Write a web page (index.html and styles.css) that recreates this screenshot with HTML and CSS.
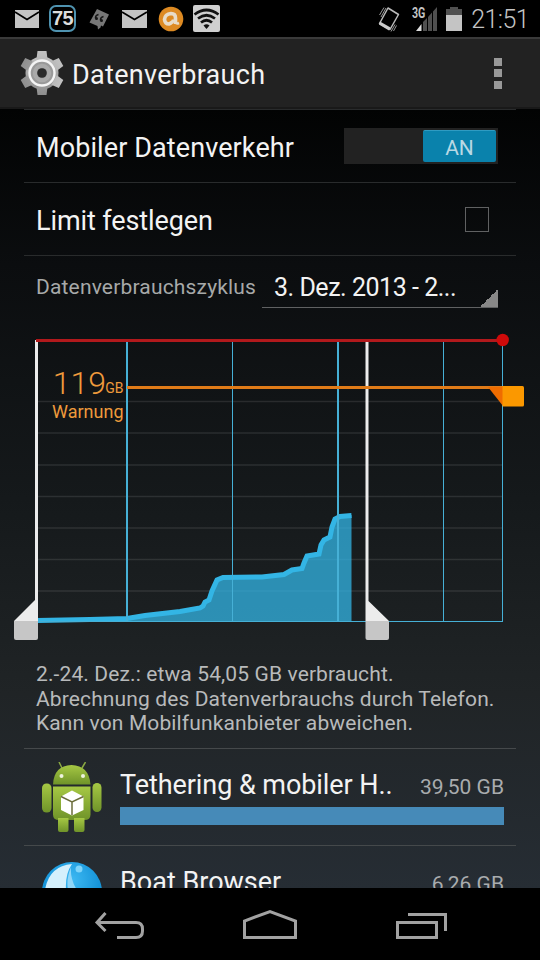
FILE: index.html
```html
<!DOCTYPE html>
<html lang="de">
<head>
    <meta charset="UTF-8">
    <meta name="viewport" content="width=device-width, initial-scale=1.0">
    <title>Datenverbrauch</title>
    <link rel="stylesheet" href="styles.css">
</head>
<body>
    <header class="status-bar">
        <div class="notifications">
            <svg class="mail" width="24" height="18" viewBox="0 0 24 18">
                <path d="M0 0h24v18H0z" fill="#c4c4c4"/>
                <path d="M0 2l12 7.500 12-7.500" fill="none" stroke="#000" stroke-width="1.6"/>
            </svg>
            <span class="battery-badge">75</span>
            <svg class="quote" width="20" height="22" viewBox="0 0 20 22">
                <path d="M8 1L20 6.500 14 18.500 12 17.500 11.500 19.500 9 21.500 8.500 18 0.500 14.500z" fill="#777"/>
                <path d="M9.500 6.500Q6 7.500 6.500 10.500M14.500 8.500Q11 9.500 11.500 12.500" fill="none" stroke="#161616" stroke-width="1.400"/>
                <circle cx="7.500" cy="10.500" r="1.500" fill="#161616"/>
                <circle cx="12.500" cy="12.500" r="1.500" fill="#161616"/>
            </svg>
            <svg class="mail" width="25" height="18" viewBox="0 0 24 18" preserveAspectRatio="none">
                <path d="M0 0h24v18H0z" fill="#c4c4c4"/>
                <path d="M0 2l12 7.500 12-7.500" fill="none" stroke="#000" stroke-width="1.6"/>
            </svg>
            <svg class="avast" width="26" height="26" viewBox="0 0 26 26">
                <circle cx="13" cy="13" r="12.300" fill="#dd8a22"/>
                <path d="M17.500 18V12Q17.500 7.500 13 7.500 7 8 6.500 13.500 7 18 11 18 14.500 17 14.500 13.500" fill="none" stroke="#e8dcc8" stroke-width="3.600"/>
                <path d="M17 14.500Q17.500 18.500 21 17" fill="none" stroke="#e8dcc8" stroke-width="2.500"/>
                <circle cx="12" cy="13.500" r="1.700" fill="#dd8a22"/>
            </svg>
            <svg class="wifi" width="27" height="27" viewBox="0 0 27 27">
                <rect width="27" height="27" rx="2" fill="#cfcfcf"/>
                <g fill="none" stroke="#111" stroke-width="2.700">
                    <path d="M1.500 9.500Q13.500 0.500 25.500 9.500"/>
                    <path d="M5 13.500q8.500-6.500 17 0"/>
                    <path d="M8 17.500q5.500-4.500 11 0"/>
                </g>
                <path d="M10.500 20.500q3-2.500 6 0l-3 3.500z" fill="#111"/>
            </svg>
        </div>
        <div class="system">
            <svg class="vibrate" width="22" height="26" viewBox="0 0 22 26">
                <path d="M10 2L20.500 8.500 12 23.500 1.500 17.500z" fill="none" stroke="#bbb" stroke-width="1.500" stroke-linejoin="round"/>
                <path d="M2 15.500l10.500 6-1.500 3-10-6z" fill="#ccc"/>
                <path d="M3 11L8 2M1.500 9L6 1.500M13 25.500l4-7M15.500 25l3-5.500" stroke="#999" stroke-width="1" fill="none"/>
            </svg>
            <div class="network">
                <svg width="25" height="25" viewBox="0 0 25 25">
                    <path d="M25 1v24h-4V5.500zM20 6.500V25h-4V11zM15 12v13h-4v-9z" fill="#505050"/>
                    <path d="M9.500 18v7H4z" fill="#ddd"/>
                </svg>
                <span class="network-type">3G</span>
            </div>
            <svg class="battery" width="16" height="24" viewBox="0 0 16 24">
                <path d="M4 0h8v2h4v6H0V2h4z" fill="#505050"/>
                <path d="M0 8h16v16H0z" fill="#c4c4c4"/>
            </svg>
            <span class="clock">21:51</span>
        </div>
    </header>

    <div class="action-bar">
        <svg class="gear" width="44" height="46" viewBox="-22 -23 44 46">
            <defs>
                <linearGradient id="metal" x1="0" y1="0" x2="0" y2="1">
                    <stop offset="0" stop-color="#c2c2c2"/>
                    <stop offset="1" stop-color="#8f8f8f"/>
                </linearGradient>
            </defs>
            <g fill="url(#metal)">
                <circle r="16.500"/>
                <path d="M-4.500-22H4.500L5.500-14H-5.500zM-4.500 22H4.500L5.500 14H-5.500z"/>
                <path d="M-4.500-22H4.500L5.500-14H-5.500zM-4.500 22H4.500L5.500 14H-5.500z" transform="rotate(60)"/>
                <path d="M-4.500-22H4.500L5.500-14H-5.500zM-4.500 22H4.500L5.500 14H-5.500z" transform="rotate(120)"/>
            </g>
            <circle r="12.500" fill="#999" stroke="#f4f4f4" stroke-width="2.400"/>
            <circle r="7.200" fill="none" stroke="#aaa" stroke-width="4"/>
            <circle r="4.800" fill="#2a2a2a"/>
        </svg>
        <h1>Datenverbrauch</h1>
        <div class="overflow-menu"><i></i><i></i><i></i></div>
    </div>

    <main>
        <div class="row">
            <span class="row-title mobile-data">Mobiler Datenverkehr</span>
            <div class="switch"><span>AN</span></div>
        </div>
        <div class="row">
            <span class="row-title limit">Limit festlegen</span>
            <div class="checkbox"></div>
        </div>
        <div class="cycle">
            <span class="cycle-label">Datenverbrauchszyklus</span>
            <div class="spinner"><span>3. Dez. 2013 - 2...</span></div>
        </div>

        <svg class="chart" width="540" height="325" viewBox="0 325 540 325">
            <!-- grid -->
            <path d="M38 401.500H502M38 433H502M38 465H502M38 496.500H502M38 528H502M38 559.500H502M38 591H502" stroke="#fff" stroke-opacity=".1" stroke-width="1.500"/>
            <!-- usage -->
            <path d="M37 620L127 618 145 615 180 611 200 608 203 606 206 602 209 600 212 591 217 580 223 577 262 577 284 574 292 570 302 568 304 563 307 556 319 554 321 545 324 540 330 537 332 527 335 519 340 516 351.500 515V621.500H37z" fill="#33b5e5" fill-opacity=".75"/>
            <path d="M37 620.500L90 619.500 127 618.500 145 615.500 180 611.500 200 608 203 606 205 602 209 600 212 591 217 580 223 577.500 262 577 284 574.500 292 570 302 568.500 304 563 307 556 319 554 321 545 324 540 330 537 332 527 335 519 340 516.500 351.500 515.500" fill="none" stroke="#33b5e5" stroke-width="5"/>
            <!-- weeks -->
            <g stroke="#46b0d6" fill="none">
                <path d="M127 342V621M338 342V621" stroke-width="2"/>
                <path d="M232.500 342V621M443.500 342V621M502.500 342V621.500M37 621.500H503" stroke-width="1"/>
            </g>
            <!-- range handles -->
            <path d="M35 340h3v281H14l21-21z" fill="#ececec"/>
            <path d="M14 621h24v17q0 2-2 2H16q-2 0-2-2z" fill="#c6c6c6"/>
            <path d="M365.500 342h3v259l20.500 20h-23.500z" fill="#ececec"/>
            <path d="M365.500 621h23.500v17q0 2-2 2h-19.500q-2 0-2-2z" fill="#c6c6c6"/>
            <!-- limit and warning -->
            <path d="M36 340.500H503" stroke="#b2191c" stroke-width="3"/>
            <circle cx="502.700" cy="340" r="6.200" fill="#cf0a0a"/>
            <path d="M127 387.500H503" stroke="#e07b18" stroke-width="3"/>
            <path d="M488 387h15v19z" fill="#ef6c00"/>
            <path d="M502.500 386h20q1.500 0 1.500 1.500v17.500q0 1.500-1.500 1.500h-20z" fill="#fb9800"/>
            <g class="warning" text-anchor="end">
                <text class="warning-value" x="106" y="393.500">119</text>
                <text class="warning-unit" x="123.500" y="393">GB</text>
                <text class="warning-label" x="123.500" y="417.500">Warnung</text>
            </g>
        </svg>

        <p class="summary">2.-24. Dez.: etwa 54,05 GB verbraucht.<br>Abrechnung des Datenverbrauchs durch Telefon.<br>Kann von Mobilfunkanbieter abweichen.</p>

        <div class="app">
            <svg class="app-icon" width="62" height="72" viewBox="0 0 62 72">
                <defs>
                    <linearGradient id="droid" x1="0" y1="0" x2="0" y2="1">
                        <stop offset="0" stop-color="#a6c844"/>
                        <stop offset="1" stop-color="#6f9329"/>
                    </linearGradient>
                </defs>
                <path d="M21 6L18 0M41 6l3.500-6" stroke="#8aa843" stroke-width="1.500"/>
                <g fill="url(#droid)">
                    <path d="M12 22.500Q13 3.500 30.500 3 48 3.500 49.500 22.500z"/>
                    <path d="M12 24.500h37.500v28q0 5.500-6 5.500H18q-6 0-6-5.500z"/>
                    <rect x="1" y="21.500" width="9.500" height="29" rx="4.500"/>
                    <rect x="51.500" y="21" width="9" height="29" rx="4.500"/>
                    <path d="M17 56h10.500v12q0 2-2 2H19q-2 0-2-2zM33 56h10.500v12q0 2-2 2H35q-2 0-2-2z"/>
                </g>
                <circle cx="20.500" cy="14" r="2" fill="#eef3df"/>
                <circle cx="42" cy="14" r="2" fill="#eef3df"/>
                <path d="M31 28.500l11.500 6V48L31 53.500 20 48V34.500z" fill="#fff"/>
                <path d="M20 34.500l11 5.500 11.500-5.500M31 40v13" fill="none" stroke="#6c6e3c" stroke-width="1.500"/>
            </svg>
            <div class="app-info">
                <div class="app-line">
                    <span class="app-name">Tethering &amp; mobiler H..</span>
                    <span class="app-usage">39,50 GB</span>
                </div>
                <div class="bar" style="width: 100%"></div>
            </div>
        </div>
        <div class="app second">
            <svg class="app-icon" width="62" height="62" viewBox="0 0 62 62">
                <defs>
                    <radialGradient id="ocean" cx=".5" cy=".3" r=".6">
                        <stop offset="0" stop-color="#3db9f3"/>
                        <stop offset=".8" stop-color="#1593d8"/>
                        <stop offset="1" stop-color="#27b6e6"/>
                    </radialGradient>
                </defs>
                <circle cx="31" cy="33" r="30" fill="url(#ocean)"/>
                <path d="M31 5Q8 7 4 31H25Q24 15 31 5z" fill="#d4f0fc"/>
                <path d="M30 8q-5 12-3 23h9Q29 20 30 8z" fill="#8fd6f8"/>
                <circle cx="38" cy="10" r="3.500" fill="#7fd4fa"/>
            </svg>
            <div class="app-info">
                <div class="app-line">
                    <span class="app-name boat">Boat Browser</span>
                    <span class="app-usage">6,26 GB</span>
                </div>
                <div class="bar" style="width: 16%"></div>
            </div>
        </div>
    </main>

    <nav>
        <svg width="540" height="72" viewBox="0 888 540 72" fill="none" stroke="#a2a2a2" stroke-width="3">
            <path d="M97 922.500H136Q142.500 922.500 142.500 929V931Q142.500 937.500 136 937.500H117M105.500 913L97 922.500 105.500 931"/>
            <path d="M244.500 937.500V921L270 911.500 295.500 921V937.500z"/>
            <path d="M397.500 922.500h39v15h-39zM408 914.500h37.500V931"/>
        </svg>
    </nav>
</body>
</html>
```

FILE: styles.css
```css
* {
    margin: 0;
    padding: 0;
    box-sizing: border-box;
}

body {
    width: 540px;
    height: 960px;
    overflow: hidden;
    display: flex;
    flex-direction: column;
    background: #000;
    color: #f3f3f3;
    font-family: Roboto, "Liberation Sans", sans-serif;
    white-space: nowrap;
}

svg {
    display: block;
    flex: none;
}

/* status bar */
.status-bar {
    height: 37px;
    flex: none;
    display: flex;
    justify-content: space-between;
    padding: 0 11px 0 15px;
}

.notifications,
.system {
    display: flex;
    align-items: center;
}

.battery-badge {
    width: 27px;
    height: 27px;
    margin: 0 13px 0 10px;
    border: 2px solid #4f93b0;
    border-radius: 7px;
    color: #ddd;
    font: bold 20px/23px "Liberation Sans", sans-serif;
    text-align: center;
    letter-spacing: -0.5px;
}

.quote {
    margin-right: 13px;
}

.avast {
    margin: 0 9px 0 11px;
}

.vibrate {
    margin-right: 12px;
}

.network {
    position: relative;
    margin-right: 9px;
}

.network-type {
    position: absolute;
    top: 0;
    left: 0;
    color: #c4c4c4;
    font: bold 14px/14px Roboto, sans-serif;
    transform: scaleX(0.76);
    transform-origin: left;
}

.clock {
    margin-left: 9px;
    padding-top: 3px;
    color: #c4c4c4;
    font-size: 25px;
    line-height: 34px;
    font-weight: 300;
    letter-spacing: -0.6px;
}

/* action bar */
.action-bar {
    height: 72px;
    flex: none;
    display: flex;
    align-items: center;
    padding: 0 38px 0 20px;
    background: #222;
    border-top: 2px solid #3a3a3a;
    border-bottom: 2px solid #191919;
}

h1 {
    flex: 1;
    margin-left: 8px;
    padding-top: 3px;
    font-size: 27px;
    line-height: 32px;
    font-weight: 400;
    letter-spacing: 0.3px;
}

.overflow-menu {
    display: flex;
    flex-direction: column;
    gap: 3.5px;
}

.overflow-menu i {
    width: 8px;
    height: 8px;
    background: #999;
}

/* content */
main {
    height: 779px;
    flex: none;
    overflow: hidden;
    background: linear-gradient(#020303, #0b0d0f 20%, #15191b 50%, #202426 75%, #262d34);
}

.row {
    height: 73px;
    margin: 0 24px;
    padding: 0 18px 0 12px;
    display: flex;
    align-items: center;
    justify-content: space-between;
    border-top: 1px solid #292b2c;
}

.row-title {
    font-size: 27px;
    line-height: 32px;
    padding-top: 3px;
}

.mobile-data {
    letter-spacing: 0.1px;
}

.limit {
    letter-spacing: -0.1px;
}

.switch {
    width: 154px;
    height: 36px;
    padding: 2px;
    display: flex;
    justify-content: flex-end;
    background: #222;
}

.switch span {
    width: 73px;
    height: 32px;
    background: #0a82ac;
    border-top: 1px solid #2f9bc2;
    border-radius: 2px;
    color: #b8d8e4;
    font-size: 21px;
    line-height: 34px;
    text-align: center;
}

.checkbox {
    width: 24px;
    height: 25px;
    margin-right: 9px;
    border: 1px solid #606162;
}

.cycle {
    height: 70px;
    margin: 0 24px;
    padding: 0 18px 0 12px;
    display: flex;
    border-top: 1px solid #292b2c;
}

.cycle-label {
    width: 226px;
    padding-top: 19px;
    color: #a7a9a9;
    font-size: 21px;
    line-height: 25px;
    letter-spacing: 0.17px;
}

.spinner {
    width: 236px;
    height: 52px;
    padding: 16px 0 0 12px;
    border-bottom: 1px solid #606162;
    background: linear-gradient(135deg, transparent 50%, #888 50%) right bottom / 18px 18px no-repeat;
    font-size: 25px;
    line-height: 32px;
    letter-spacing: -0.47px;
}

.warning {
    fill: #ee9a3c;
}

.warning-value {
    font-size: 32px;
    font-weight: 300;
}

.warning-unit {
    font-size: 14px;
}

.warning-label {
    font-size: 18px;
}

.summary {
    height: 98px;
    padding: 12px 36px 0;
    color: #b8babb;
    font-size: 21px;
    line-height: 24.5px;
    letter-spacing: 0.12px;
}

.app {
    height: 97px;
    margin: 0 24px;
    padding: 13px 12px 0 17px;
    display: flex;
    border-top: 1px solid #45494b;
}

.app-info {
    width: 384px;
    margin-left: 17px;
    padding-top: 5px;
}

.app-line {
    display: flex;
    justify-content: space-between;
    align-items: baseline;
    height: 40px;
}

.app-name {
    font-size: 27px;
    line-height: 36px;
    letter-spacing: -0.07px;
}

.boat {
    letter-spacing: 0;
}

.app-usage {
    color: #a9acae;
    font-size: 21px;
}

.bar {
    height: 18px;
    background: #468ab8;
}

nav {
    height: 72px;
    flex: none;
}
```
